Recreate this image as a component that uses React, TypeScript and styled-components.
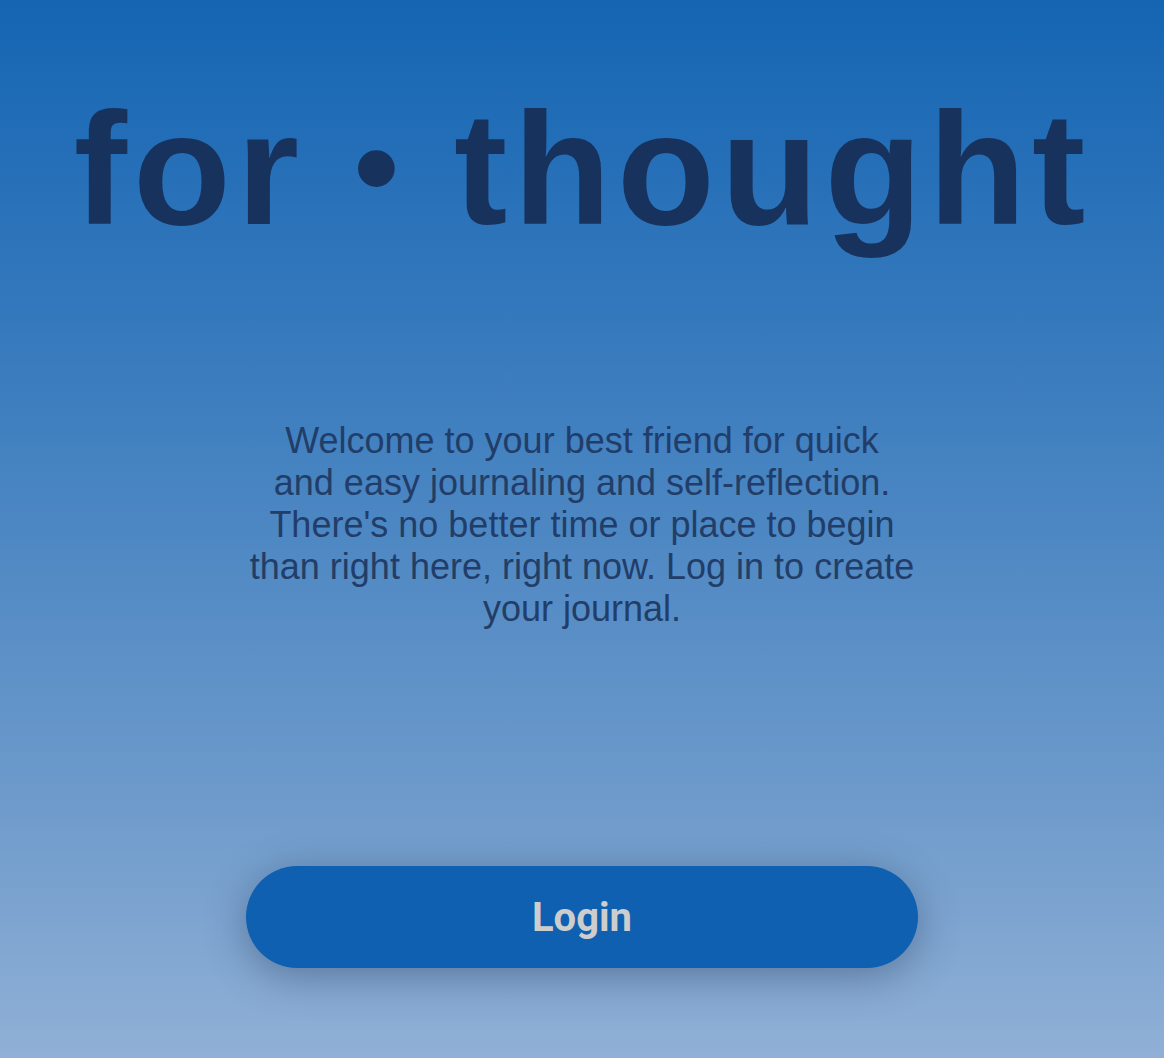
import React from "react";
import styled, { createGlobalStyle } from "styled-components";

const Global = createGlobalStyle`
  html, body { margin: 0; padding: 0; }
  body { font-family: "Liberation Sans", Arial, sans-serif; }
`;

const Page = styled.main`
  box-sizing: border-box;
  width: 100%;
  min-height: 1058px;
  background: linear-gradient(180deg, #1565b3 0%, #3a7cbe 35%, #6d9acb 75%, #90b0d6 100%);
  display: flex;
  flex-direction: column;
  align-items: center;
  padding-top: 70px;
`;

const Title = styled.h1`
  margin: 0 0 0 1px;
  font-family: "Liberation Sans", Arial, sans-serif;
  font-weight: 700;
  font-size: 160px;
  line-height: 193px;
  letter-spacing: 6px;
  color: #17325c;
  white-space: nowrap;
`;

const Dot = styled.span`
  font-size: 128px;
  letter-spacing: 0;
  vertical-align: 13px;
  margin: 0 55px 0 49px;
`;

const Intro = styled.p`
  margin: 155px 0 0;
  text-align: center;
  font-family: "Liberation Sans", Arial, sans-serif;
  font-weight: 400;
  font-size: 36px;
  line-height: 42px;
  color: #213d68;
`;

const LoginButton = styled.button`
  margin-top: 236px;
  width: 672px;
  height: 102px;
  border: none;
  border-radius: 51px;
  background: #0f60b0;
  color: #cdcdcd;
  font-family: Roboto, "Liberation Sans", sans-serif;
  font-weight: 700;
  font-size: 40px;
  box-shadow: 0 8px 40px rgba(40, 60, 90, 0.45);
  cursor: pointer;
`;

export default function App() {
  return (
    <Page>
      <Global />
      <Title>
        for<Dot>•</Dot>thought
      </Title>
      <Intro>
        Welcome to your best friend for quick
        <br />
        and easy journaling and self-reflection.
        <br />
        There's no better time or place to begin
        <br />
        than right here, right now. Log in to create
        <br />
        your journal.
      </Intro>
      <LoginButton>Login</LoginButton>
    </Page>
  );
}
